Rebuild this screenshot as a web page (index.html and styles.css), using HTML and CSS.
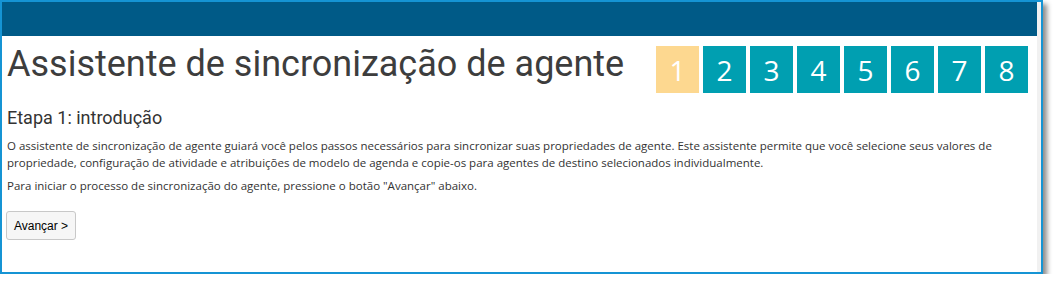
FILE: index.html
```html
<!DOCTYPE html>
<html lang="pt">
<head>
  <meta charset="UTF-8">
  <title>Assistente de sincronização de agente</title>
  <link rel="stylesheet" href="styles.css">
</head>
<body>
  <!-- Wizard window -->
  <div class="frame">
    <div class="main">
      <div class="topbar"></div>

      <div class="content">
        <div class="head-row">
          <h1 class="title">Assistente de sincronização de agente</h1>
          <div class="steps">
            <span class="step current">1</span>
            <span class="step">2</span>
            <span class="step">3</span>
            <span class="step">4</span>
            <span class="step">5</span>
            <span class="step">6</span>
            <span class="step">7</span>
            <span class="step">8</span>
          </div>
        </div>

        <h4 class="stage">Etapa 1: introdução</h4>
        <p class="text">O assistente de sincronização de agente guiará você pelos passos necessários para sincronizar suas propriedades de agente. Este assistente permite que você selecione seus valores de propriedade, configuração de atividade e atribuições de modelo de agenda e copie-os para agentes de destino selecionados individualmente.</p>
        <p class="text">Para iniciar o processo de sincronização do agente, pressione o botão "Avançar" abaixo.</p>

        <button class="next-btn">Avançar &gt;</button>
      </div>
    </div>
    <div class="track"></div>
  </div>
</body>
</html>
```

FILE: styles.css
```css
* {
  margin: 0;
  padding: 0;
  box-sizing: border-box;
}

body {
  background: #fff;
  font-family: "Open Sans", sans-serif;
  color: #333;
}

/* Outer window with blue border + drop shadow */
.frame {
  width: 1043px;
  height: 274px;
  border: 2px solid #1594d4;
  box-shadow: 4px 4px 5px rgba(0, 0, 0, 0.45);
  display: flex;
}

.main {
  flex: 1;
}

/* thin scrollbar-ish strip on the right */
.track {
  width: 4px;
  background: #f1f1f1;
}

.topbar {
  height: 34px;
  background: #005a87;
}

.content {
  padding: 10px 9px 0 5px;
}

.head-row {
  display: flex;
  justify-content: space-between;
  align-items: flex-start;
}

.title {
  font-family: Roboto, sans-serif;
  font-weight: normal;
  font-size: 36px;
  line-height: 36px;
  color: #3d3d3d;
}

.steps {
  display: flex;
  gap: 4px;
}

.step {
  width: 43px;
  height: 47px;
  background: #009fb1;
  color: #fff;
  font-size: 28px;
  display: flex;
  align-items: center;
  justify-content: center;
}

.step.current {
  background: #fdd890;
}

.stage {
  font-family: Roboto, sans-serif;
  font-weight: normal;
  font-size: 18px;
  line-height: 22px;
  margin-top: 14px;
  color: #333;
}

.text {
  font-size: 11.5px;
  line-height: 17px;
  margin-top: 8px;
  color: #333;
}

.text + .text {
  margin-top: 6px;
}

/* Navigation button */
.next-btn {
  margin-top: 17px;
  margin-left: -1px;
  width: 70px;
  height: 29px;
  font-family: "Liberation Sans", Arial, sans-serif;
  font-size: 12px;
  color: #000;
  background: #f6f6f6;
  border: 1px solid #c8c8c8;
  border-radius: 3px;
}
```
